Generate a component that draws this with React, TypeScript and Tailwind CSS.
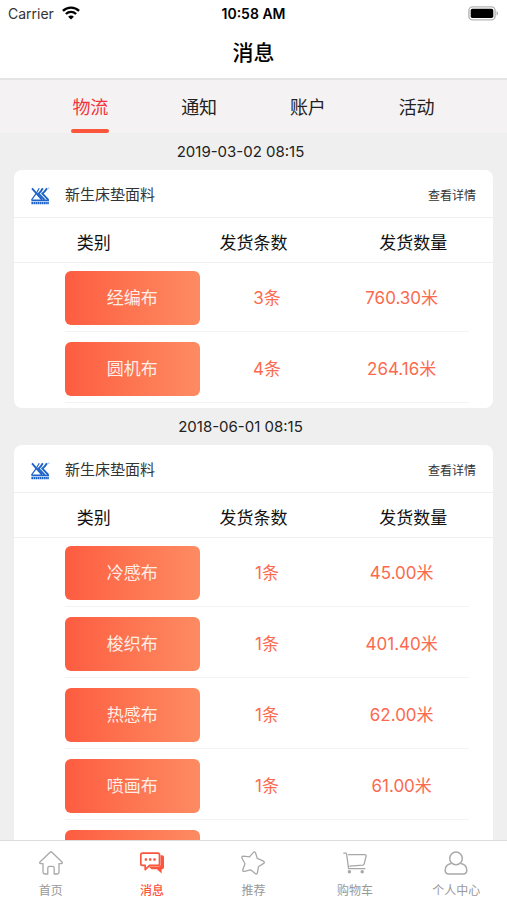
import type { ReactNode } from "react";

type Shipment = { name: string; count: string; amount: string };
type Message = { date: string; items: Shipment[] };

const tabs = ["物流", "通知", "账户", "活动"];

const messages: Message[] = [
  {
    date: "2019-03-02 08:15",
    items: [
      { name: "经编布", count: "3条", amount: "760.30米" },
      { name: "圆机布", count: "4条", amount: "264.16米" },
    ],
  },
  {
    date: "2018-06-01 08:15",
    items: [
      { name: "冷感布", count: "1条", amount: "45.00米" },
      { name: "梭织布", count: "1条", amount: "401.40米" },
      { name: "热感布", count: "1条", amount: "62.00米" },
      { name: "喷画布", count: "1条", amount: "61.00米" },
      { name: "", count: "", amount: "" },
    ],
  },
];

function WifiIcon() {
  return (
    <svg viewBox="0 0 18 14" className="h-[14px] w-[18px]" fill="none" stroke="#000" strokeWidth="2.3" aria-hidden="true">
      <path d="M0.9 4.9C5.4 0.5 12.6 0.5 17.1 4.9" />
      <path d="M3.9 8C6.8 5.2 11.2 5.2 14.1 8" />
      <path d="M9 13.6 6.1 10.7C7.7 9.2 10.3 9.2 11.9 10.7Z" fill="#000" stroke="none" />
    </svg>
  );
}

function BatteryIcon() {
  return (
    <svg viewBox="0 0 31 15" className="h-[15px] w-[31px]" aria-hidden="true">
      <rect x="0.9" y="0.9" width="26.2" height="13" rx="3.6" fill="#fff" stroke="#b5b5b5" strokeWidth="1.4" />
      <rect x="2.7" y="2.7" width="22.6" height="9.4" rx="1.8" fill="#000" />
      <path d="M28.5 5.2C30.6 5.8 30.6 9 28.5 9.6Z" fill="#b5b5b5" />
    </svg>
  );
}

function BrandLogo() {
  return (
    <svg viewBox="0 0 20 18" className="h-[18px] w-5" aria-hidden="true">
      <g fill="none" stroke="#1d63c8">
        <path d="M2 1.4 6.4 6.4 12 12.6" strokeWidth="1.9" />
        <path d="M9.2 1.2 6.4 6.2 1.6 12.8" strokeWidth="1.2" />
        <path d="M12.8 1.2C11.6 3.4 10.2 5.2 8.6 6.6L14.6 12.8" strokeWidth="1.9" />
        <path d="M17 1.2C15.6 3.4 14.2 5.2 12.4 6.6L18.4 12.8" strokeWidth="1.9" />
        <path d="M1.4 13.4H19" strokeWidth="1.8" />
        <path d="M1.4 16.2H19" strokeWidth="2.2" strokeDasharray="1.7 0.4" />
      </g>
      <circle cx="18.8" cy="1.2" r="0.6" fill="#7ea6e0" />
    </svg>
  );
}

function HomeIcon() {
  return (
    <svg viewBox="0 0 24 24" className="size-6" fill="none" stroke="#a8a8a8" strokeWidth="1.3" strokeLinejoin="round" aria-hidden="true">
      <path d="M11.1 1.2 1 11C0.4 11.7 0.7 12.6 1.6 12.6H4V21.2C4 22.4 4.6 23 5.8 23H8.8V17.2C8.8 16 9.4 15.4 10.5 15.4H13.5C14.6 15.4 15.2 16 15.2 17.2V23H18.2C19.4 23 20 22.4 20 21.2V12.6H22.4C23.3 12.6 23.6 11.7 23 11L12.9 1.2C12.3 0.6 11.7 0.6 11.1 1.2Z" />
    </svg>
  );
}

function ChatIcon() {
  return (
    <svg viewBox="0 0 24 24" className="size-6" aria-hidden="true">
      <path d="M20.5 4.2H22C23.2 4.2 24 5 24 6.2V16.2C24 17.4 23.2 18.2 22 18.2H21.6V22.4L17 18.2H11.5L8.6 15.4H18.4C19.8 15.4 20.5 14.7 20.5 13.4Z" fill="#fb563c" />
      <path d="M2.4 2.1H17.8C18.8 2.1 19.5 2.8 19.5 3.8V12.7C19.5 13.7 18.8 14.4 17.8 14.4H9.6L5.2 18.6V14.4H2.4C1.4 14.4 0.8 13.7 0.8 12.7V3.8C0.8 2.8 1.4 2.1 2.4 2.1Z" fill="#fff" stroke="#fb563c" strokeWidth="1.7" strokeLinejoin="round" />
      <g fill="#fb563c">
        <rect x="4.7" y="7.3" width="2.4" height="2.4" rx="0.6" />
        <rect x="9" y="7.3" width="2.4" height="2.4" rx="0.6" />
        <rect x="13.3" y="7.3" width="2.4" height="2.4" rx="0.6" />
      </g>
    </svg>
  );
}

function StarIcon() {
  return (
    <svg viewBox="0 0 24 24" className="size-6" fill="none" stroke="#a8a8a8" strokeWidth="1.3" strokeLinejoin="round" aria-hidden="true">
      <path d="M12.2 1.6C13 0.6 14.2 0.8 14.6 2L16.2 7.4 22.4 10.2C23.5 10.7 23.6 11.8 22.6 12.4L17.4 15.8 16.4 21.8C16.2 23 15.2 23.4 14.2 22.6L9.6 18.8 3.4 20.4C2.2 20.7 1.4 19.9 1.8 18.8L4 12.8 1 7.2C0.4 6.1 1 5.2 2.2 5.2L8.6 5.8Z" />
    </svg>
  );
}

function CartIcon() {
  return (
    <svg viewBox="0 0 24 24" className="size-6" fill="none" stroke="#a8a8a8" strokeWidth="1.3" strokeLinecap="round" strokeLinejoin="round" aria-hidden="true">
      <path d="M0.8 2.2H2.6C3.2 2.2 3.5 2.5 3.6 3.1L5.6 17.6H22" />
      <path d="M5.6 3.7H22C22.9 3.7 23.3 4.3 23.1 5.1L21.2 12.9C21 13.7 20.5 14.1 19.7 14.2L6.8 15.2" />
      <circle cx="6.4" cy="20.8" r="1.1" fill="#a8a8a8" />
      <circle cx="19.2" cy="20.8" r="1.1" fill="#a8a8a8" />
    </svg>
  );
}

function PersonIcon() {
  return (
    <svg viewBox="0 0 24 24" className="size-6" fill="none" stroke="#a8a8a8" strokeWidth="1.5" strokeLinejoin="round" aria-hidden="true">
      <circle cx="12" cy="7.4" r="6.3" />
      <path d="M7.2 12.6C3.6 13.2 1.2 15.9 1.2 19.3C1.2 21.8 2.6 23 4.8 23H19.2C21.4 23 22.8 21.8 22.8 19.3C22.8 15.9 20.4 13.2 16.8 12.6" />
    </svg>
  );
}

const navItems: { label: string; icon: ReactNode; active?: boolean }[] = [
  { label: "首页", icon: <HomeIcon /> },
  { label: "消息", icon: <ChatIcon />, active: true },
  { label: "推荐", icon: <StarIcon /> },
  { label: "购物车", icon: <CartIcon /> },
  { label: "个人中心", icon: <PersonIcon /> },
];

function MessageCard({ message }: { message: Message }) {
  return (
    <section>
      <p className="flex h-[37px] items-center justify-center pr-[26px] pt-0.5 text-[15px] text-[#222]">{message.date}</p>
      <article className="mx-[14px] rounded-lg bg-white pb-[5px]">
        <header className="flex h-12 items-center border-b border-[#f0f0f0] pl-4 pr-[17px] pt-1">
          <BrandLogo />
          <h2 className="ml-[15px] flex-1 text-[15px] text-[#333]">新生床垫面料</h2>
          <a href="#detail" className="text-xs text-[#333]">查看详情</a>
        </header>
        <table className="block">
          <thead className="block">
            <tr className="grid h-[45px] grid-cols-3 items-center border-b border-[#f0f0f0] pt-2 text-[17px] text-[#111]">
              <th className="font-normal">类别</th>
              <th className="font-normal">发货条数</th>
              <th className="font-normal">发货数量</th>
            </tr>
          </thead>
          <tbody className="ml-[51px] mr-6 flex flex-col gap-0.5">
            {message.items.map((item, index) => (
              <tr key={index} className="grid grid-cols-3 items-center border-b border-[#f3f3f3] pt-2 pb-1.5 text-center text-[17px] text-[#fb6a4e]">
                <td>
                  <button type="button" className="block h-[54px] w-full rounded-md bg-linear-to-r from-[#fd5c40] to-[#fd8b62] pt-0.5 text-[#ffeee6]">
                    {item.name}
                  </button>
                </td>
                <td className="pt-0.5">{item.count}</td>
                <td className="pt-0.5">{item.amount}</td>
              </tr>
            ))}
          </tbody>
        </table>
      </article>
    </section>
  );
}

export default function App() {
  return (
    <div className="flex h-screen flex-col overflow-hidden bg-[#efefef] font-[Inter,'Noto_Sans_CJK_SC',sans-serif]">
      <div className="grid h-7 shrink-0 grid-cols-3 items-center bg-white px-2 pb-0.5 text-[14px]">
        <div className="flex items-center gap-2 text-[#333]">
          Carrier
          <WifiIcon />
        </div>
        <div className="text-center font-semibold text-black">10:58 AM</div>
        <div className="flex justify-end">
          <BatteryIcon />
        </div>
      </div>
      <header className="flex h-[52px] shrink-0 items-center justify-center border-b-2 border-[#e4e4e4] bg-white">
        <h1 className="text-[21px] font-medium text-black">消息</h1>
      </header>
      <div role="tablist" className="grid h-[53px] shrink-0 grid-cols-4 bg-[#f4f2f3] px-9">
        {tabs.map((tab, index) => (
          <button
            key={tab}
            type="button"
            role="tab"
            aria-selected={index === 0}
            className={`flex flex-col items-center text-[18px] ${index === 0 ? "text-[#f5333a]" : "text-[#222]"}`}
          >
            <span className="flex h-[49px] items-center pt-1.5">{tab}</span>
            <span className={`h-1 w-[38px] rounded-full ${index === 0 ? "bg-[#fb563c]" : ""}`} />
          </button>
        ))}
      </div>
      <main className="min-h-0 flex-1 overflow-hidden">
        {messages.map((message) => (
          <MessageCard key={message.date} message={message} />
        ))}
      </main>
      <nav className="grid h-[60px] shrink-0 grid-cols-5 border-t border-[#dcdcdc] bg-white">
        {navItems.map((item) => (
          <a
            key={item.label}
            href="#"
            className={`flex flex-col items-center gap-2 pt-2.5 text-xs ${item.active ? "font-medium text-[#fb563c]" : "text-[#999]"}`}
          >
            {item.icon}
            {item.label}
          </a>
        ))}
      </nav>
    </div>
  );
}
